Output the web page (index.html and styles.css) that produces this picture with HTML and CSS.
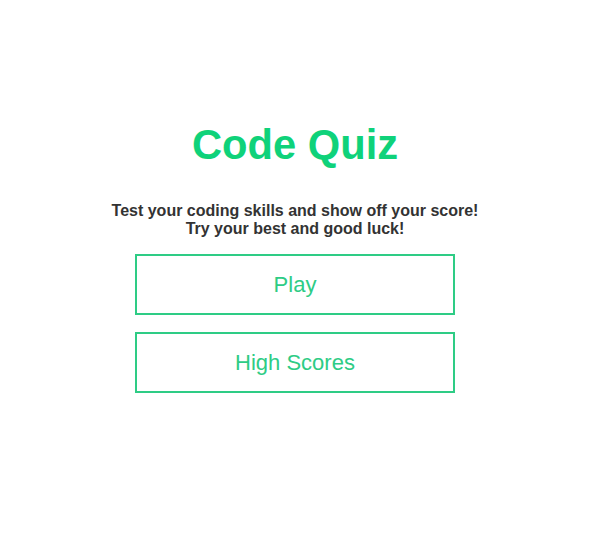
FILE: index.html
```html
<!DOCTYPE html>
<html>
<head>
<meta charset="utf-8">
<link rel="stylesheet" href="styles.css">
</head>
<body>
<main class="page">
  <h1 class="title">Code Quiz</h1>
  <p class="intro">Test your coding skills and show off your score!<br>Try your best and good luck!</p>
  <div class="actions">
    <button class="btn">Play</button>
    <button class="btn">High Scores</button>
  </div>
</main>
</body>
</html>
```
FILE: styles.css
```css
html, body {
  margin: 0;
  padding: 0;
  background: #ffffff;
}
.page {
  width: 590px;
  display: flex;
  flex-direction: column;
  align-items: center;
  font-family: "Liberation Sans", Arial, sans-serif;
  padding-top: 121px;
}
.title {
  margin: 0;
  font-size: 41.7px;
  line-height: 48px;
  font-weight: bold;
  color: #0fd27a;
}
.intro {
  margin: 33px 0 0 0;
  font-size: 16px;
  line-height: 18px;
  font-weight: bold;
  color: #333333;
  text-align: center;
}
.actions {
  display: flex;
  flex-direction: column;
  gap: 17px;
  margin-top: 16px;
}
.btn {
  width: 320px;
  height: 61px;
  background: #ffffff;
  border: 2px solid #2ecc85;
  color: #2ecc85;
  font-family: "Liberation Sans", Arial, sans-serif;
  font-size: 22px;
  padding: 0;
}
```
